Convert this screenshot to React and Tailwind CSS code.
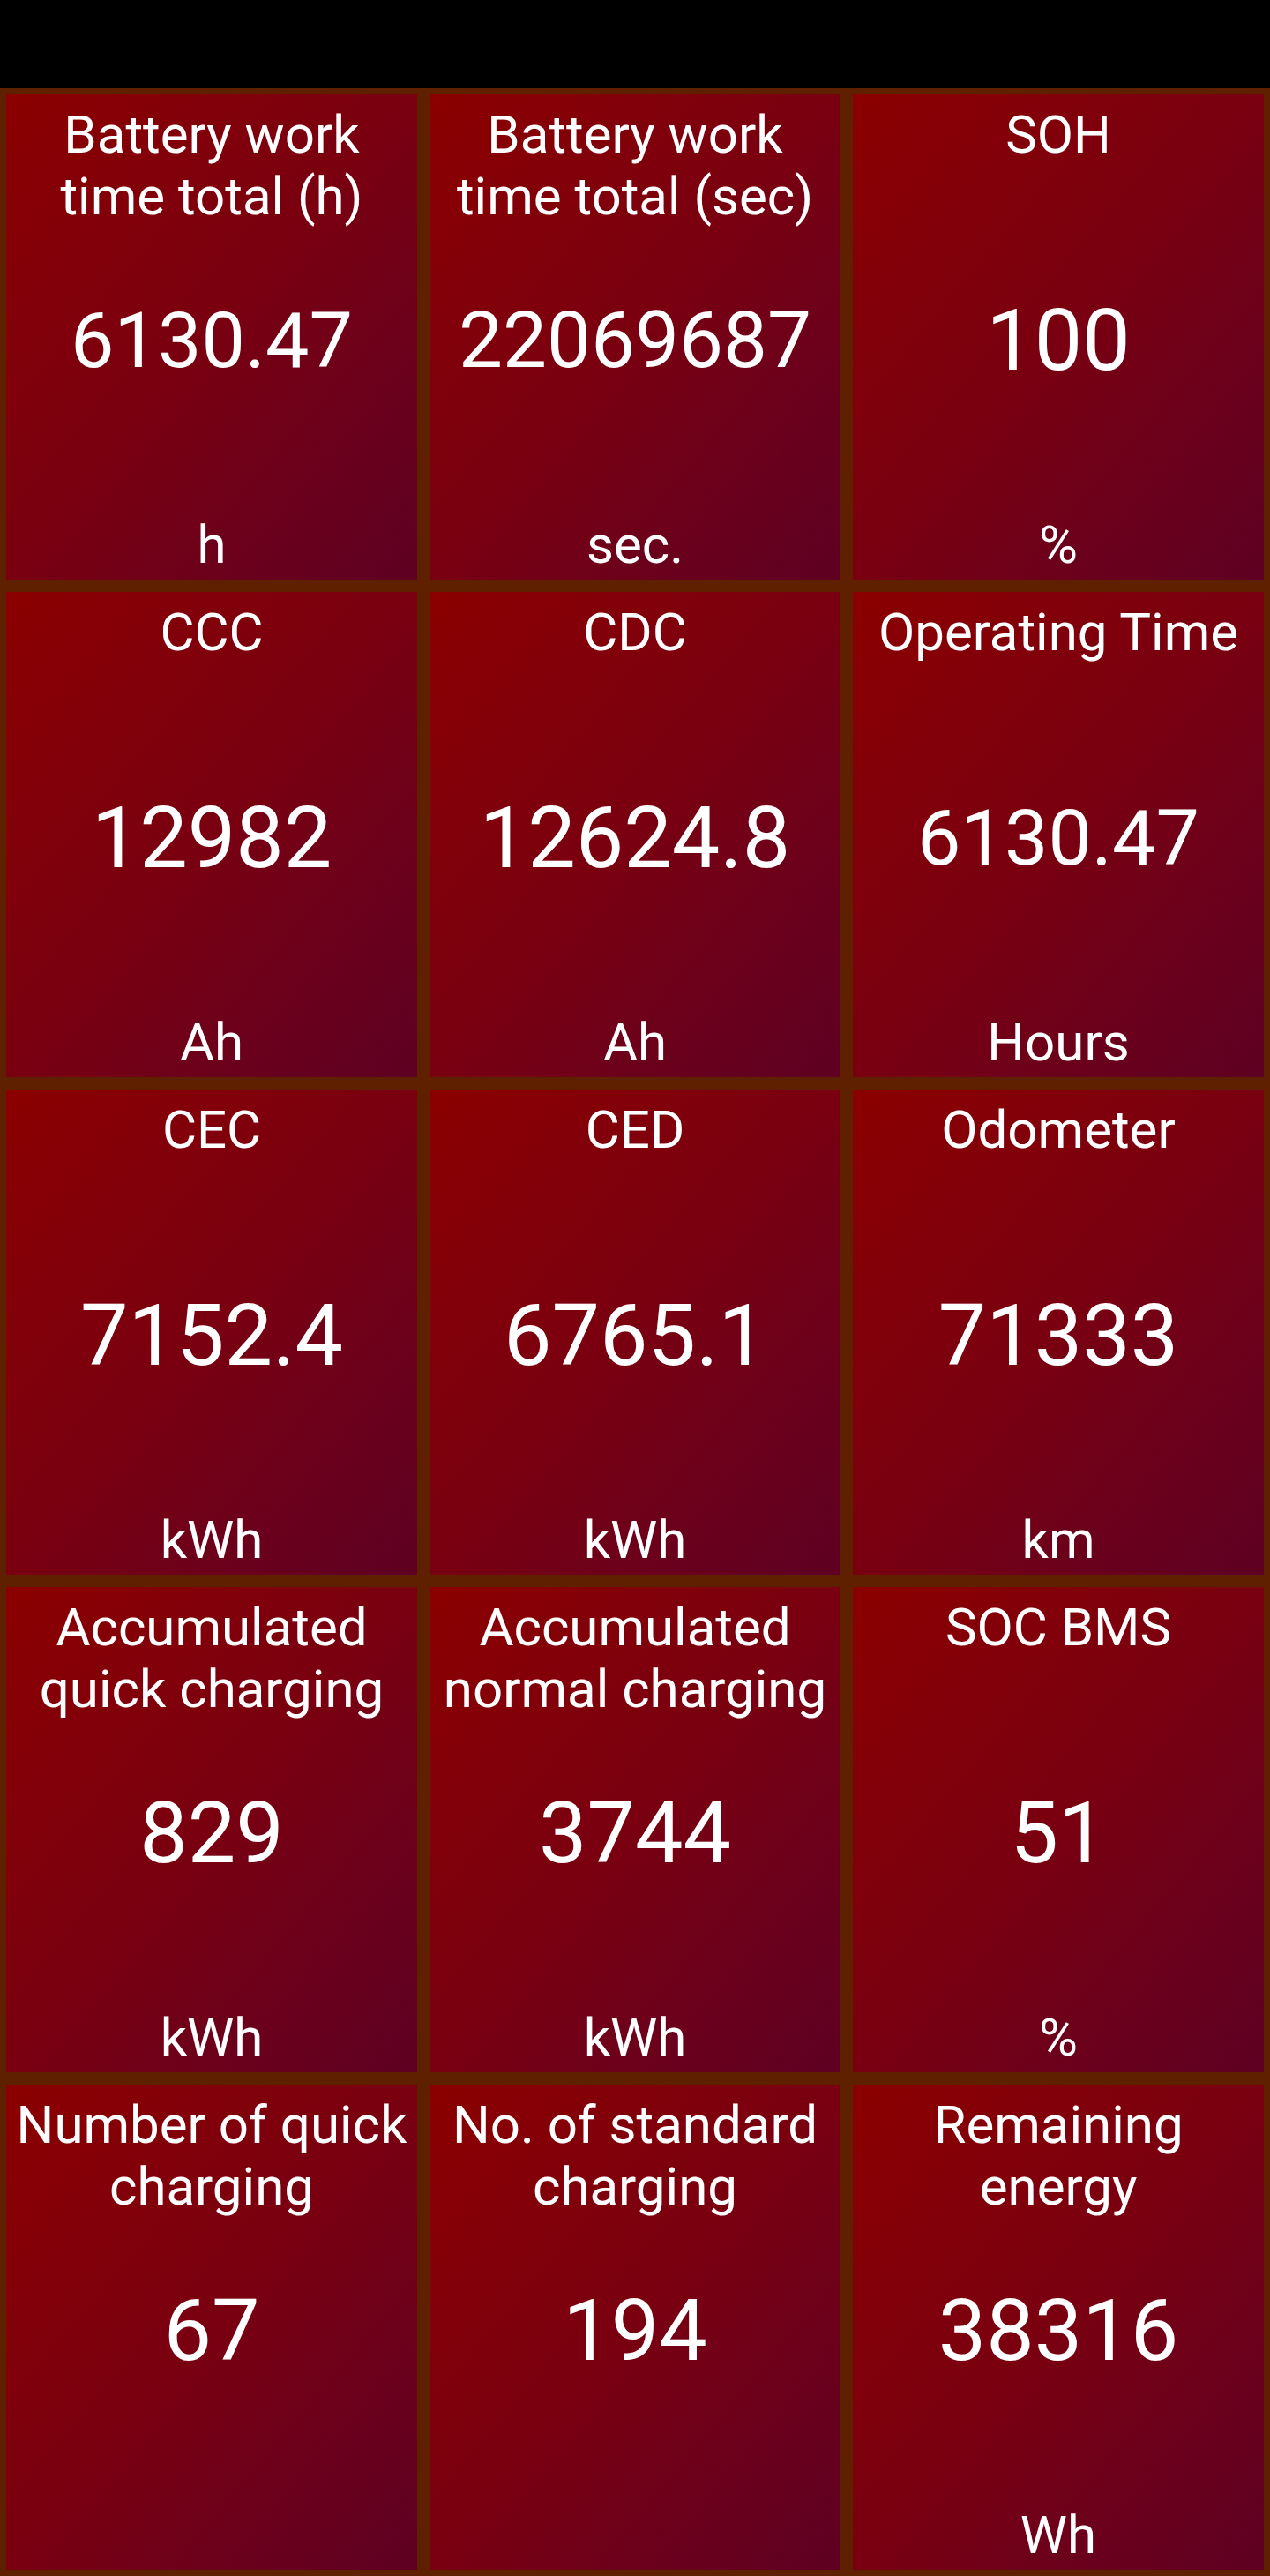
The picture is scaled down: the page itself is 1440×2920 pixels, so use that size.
import React from "react";

const cells = [
  { t: ["Battery work", "time total (h)"], v: "6130.47", u: "h", vc: "text-[88px]" },
  { t: ["Battery work", "time total (sec)"], v: "22069687", u: "sec.", vc: "text-[89px]" },
  { t: ["SOH"], v: "100", u: "%", vc: "text-[97px]" },
  { t: ["CCC"], v: "12982", u: "Ah", vc: "text-[97px]" },
  { t: ["CDC"], v: "12624.8", u: "Ah", vc: "text-[97px]" },
  { t: ["Operating Time"], v: "6130.47", u: "Hours", vc: "text-[88px]" },
  { t: ["CEC"], v: "7152.4", u: "kWh", vc: "text-[97px]" },
  { t: ["CED"], v: "6765.1", u: "kWh", vc: "text-[97px]" },
  { t: ["Odometer"], v: "71333", u: "km", vc: "text-[97px]" },
  { t: ["Accumulated", "quick charging"], v: "829", u: "kWh", vc: "text-[97px]" },
  { t: ["Accumulated", "normal charging"], v: "3744", u: "kWh", vc: "text-[97px]" },
  { t: ["SOC BMS"], v: "51", u: "%", vc: "text-[97px]" },
  { t: ["Number of quick", "charging"], v: "67", u: "", vc: "text-[97px]" },
  { t: ["No. of standard", "charging"], v: "194", u: "", vc: "text-[97px]" },
  { t: ["Remaining", "energy"], v: "38316", u: "Wh", vc: "text-[97px]" },
];

function Cell({ c }) {
  return (
    <div className="grid h-[550px] bg-linear-to-br from-[#8b0000] via-[#790010] to-[#5e0022] text-white">
      <div className="col-start-1 row-start-1 self-start pt-[11px] text-center text-[60px] leading-[70px]">
        {c.t.map((line, i) => (
          <div key={i} className="whitespace-nowrap">
            {line}
          </div>
        ))}
      </div>
      <div
        className={`col-start-1 row-start-1 self-center pt-[9px] text-center leading-[1.17] whitespace-nowrap ${c.vc}`}
      >
        {c.v}
      </div>
      <div className="col-start-1 row-start-1 self-end pb-[4px] text-center text-[60px] leading-[70px] whitespace-nowrap">
        {c.u}
      </div>
    </div>
  );
}

export default function App() {
  return (
    <div
      className="w-[1440px] h-[2920px] bg-black flex flex-col"
      style={{ fontFamily: "Roboto, 'Noto Sans', 'Liberation Sans', sans-serif" }}
    >
      <div className="h-[100px] bg-black shrink-0" />
      <div className="grid grid-cols-3 auto-rows-[550px] gap-[14px] p-[7px] bg-[#5f2000]">
        {cells.map((c, i) => (
          <Cell key={i} c={c} />
        ))}
      </div>
    </div>
  );
}
